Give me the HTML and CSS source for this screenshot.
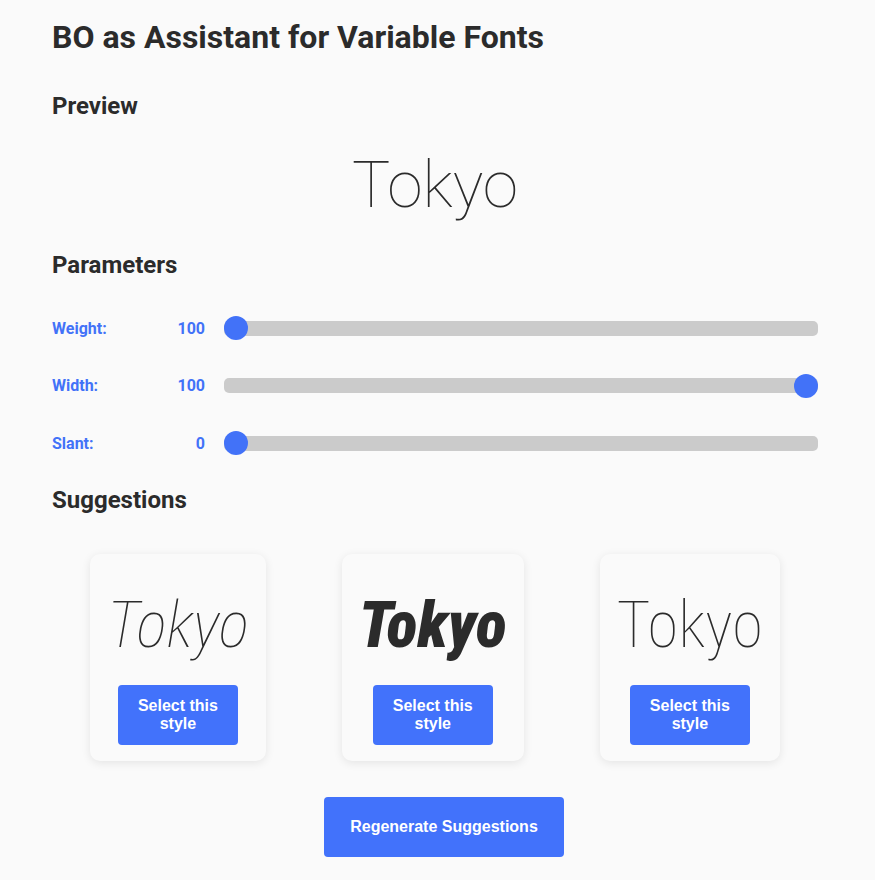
FILE: index.html
```html
<!DOCTYPE html>
<html lang="en">
<head>
<meta charset="utf-8">
<title>BO as Assistant for Variable Fonts</title>
<link rel="stylesheet" href="styles.css">
</head>
<body>
<main class="app">
  <h1 class="title">BO as Assistant for Variable Fonts</h1>

  <h2 class="section-title sec-preview">Preview</h2>
  <div class="preview">Tokyo</div>

  <h2 class="section-title sec-params">Parameters</h2>
  <div class="params">
    <div class="param-row">
      <label class="param-label" for="w">Weight:</label>
      <span class="param-value">100</span>
      <input class="slider" id="w" type="range" min="100" max="900" value="100">
    </div>
    <div class="param-row">
      <label class="param-label" for="wd">Width:</label>
      <span class="param-value">100</span>
      <input class="slider" id="wd" type="range" min="75" max="100" value="100">
    </div>
    <div class="param-row">
      <label class="param-label" for="s">Slant:</label>
      <span class="param-value">0</span>
      <input class="slider" id="s" type="range" min="0" max="15" value="0">
    </div>
  </div>

  <h2 class="section-title sec-sugg">Suggestions</h2>
  <div class="cards">
    <div class="card">
      <div class="card-sample sample-a">Tokyo</div>
      <button class="btn btn-select">Select this style</button>
    </div>
    <div class="card">
      <div class="card-sample sample-b">Tokyo</div>
      <button class="btn btn-select">Select this style</button>
    </div>
    <div class="card">
      <div class="card-sample sample-c">Tokyo</div>
      <button class="btn btn-select">Select this style</button>
    </div>
  </div>

  <div class="regen-wrap">
    <button class="btn btn-regen">Regenerate Suggestions</button>
  </div>
</main>
</body>
</html>
```

FILE: styles.css
```css
html, body {
  margin: 0;
  padding: 0;
  background: #fafafa;
}

body {
  font-family: Roboto, "Liberation Sans", sans-serif;
  color: #2b2b2b;
}

.app {
  padding: 0 57px 40px 52px;
}

.title {
  margin: 18px 0 0;
  font-size: 32px;
  font-weight: 700;
  line-height: normal;
}

.section-title {
  margin: 0;
  font-size: 24px;
  font-weight: 700;
  line-height: normal;
}

.sec-preview { margin-top: 36px; }
.sec-params { margin-top: 28px; }
.sec-sugg { margin-top: 31px; }

.preview {
  margin-top: 28px;
  text-align: center;
  font-size: 64px;
  font-weight: 100;
  line-height: normal;
  color: #2b2b2b;
}

.params {
  margin-top: 37px;
  display: flex;
  flex-direction: column;
  gap: 33.5px;
}

.param-row {
  display: flex;
  align-items: center;
  height: 24px;
}

.param-label {
  flex: 0 0 120px;
  font-size: 16px;
  font-weight: 700;
  color: #4272f8;
}

.param-value {
  flex: 0 0 33px;
  text-align: right;
  font-size: 16px;
  font-weight: 700;
  color: #4272f8;
}

.slider {
  -webkit-appearance: none;
  appearance: none;
  flex: 1;
  margin: 0 0 0 19px;
  height: 15px;
  border-radius: 5px;
  background: #cbcbcb;
  outline: none;
}

.slider::-webkit-slider-thumb {
  -webkit-appearance: none;
  appearance: none;
  width: 24px;
  height: 24px;
  border-radius: 50%;
  background: #4272f8;
  border: none;
}

.cards {
  margin-top: 40px;
  display: flex;
  justify-content: space-around;
}

.card {
  background: #fafafa;
  border-radius: 10px;
  box-shadow: 0 2px 10px rgba(0, 0, 0, 0.09);
  padding: 17px 17px 16px;
  display: flex;
  flex-direction: column;
  align-items: center;
}

.card-sample {
  font-size: 64px;
  line-height: normal;
  color: #2b2b2b;
  margin: 17px 0 22px;
  white-space: nowrap;
}

.sample-a {
  font-weight: 100;
  font-style: italic;
  font-stretch: 85%;
}

.sample-b {
  font-weight: 900;
  font-style: italic;
  font-stretch: 75%;
}

.sample-c {
  font-weight: 100;
  font-stretch: 85%;
  font-variation-settings: "wdth" 85;
}

.btn {
  font-family: "Liberation Sans", Arial, sans-serif;
  font-weight: 700;
  font-size: 16px;
  line-height: 18px;
  color: #ffffff;
  background: #4272fb;
  border: none;
  border-radius: 4px;
  cursor: pointer;
}

.btn-select {
  width: 120px;
  height: 60px;
  padding: 0 10px;
}

.regen-wrap {
  margin-top: 36px;
  display: flex;
  justify-content: center;
  padding-left: 18px;
}

.btn-regen {
  width: 240px;
  height: 60px;
  padding: 0 20px;
}
```
